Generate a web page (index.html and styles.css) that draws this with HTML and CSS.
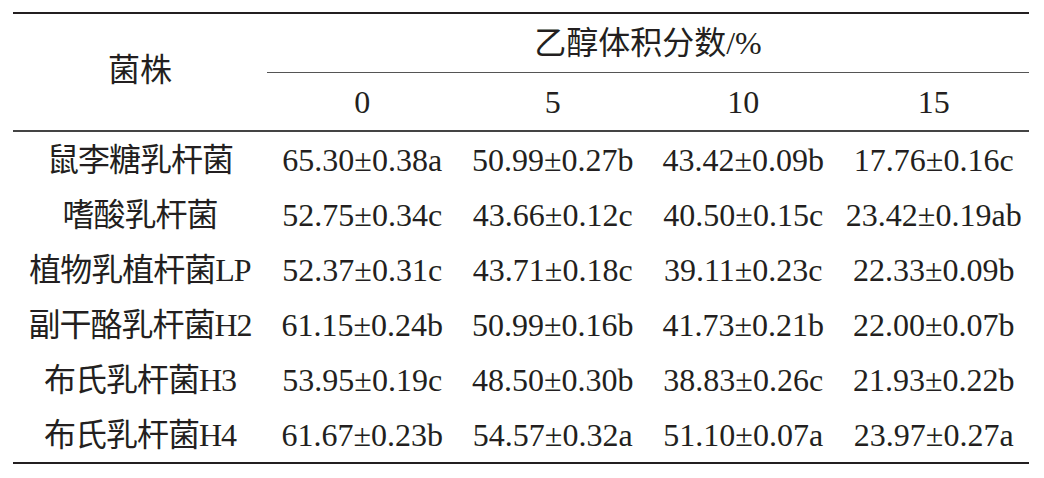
FILE: index.html
```html
<!DOCTYPE html>
<html lang="zh-CN">
<head>
  <meta charset="UTF-8">
  <meta name="viewport" content="width=device-width, initial-scale=1.0">
  <title>乙醇体积分数对菌株的影响</title>
  <link rel="stylesheet" href="styles.css">
</head>
<body>
  <table class="data-table">
    <thead>
      <tr class="head-top">
        <th rowspan="2" class="strain-head">菌株</th>
        <th colspan="4" class="group-head">乙醇体积分数/%</th>
      </tr>
      <tr class="head-sub">
        <th>0</th>
        <th>5</th>
        <th>10</th>
        <th>15</th>
      </tr>
    </thead>
    <tbody>
      <tr>
        <td class="strain">鼠李糖乳杆菌</td>
        <td>65.30±0.38a</td>
        <td>50.99±0.27b</td>
        <td>43.42±0.09b</td>
        <td>17.76±0.16c</td>
      </tr>
      <tr>
        <td class="strain">嗜酸乳杆菌</td>
        <td>52.75±0.34c</td>
        <td>43.66±0.12c</td>
        <td>40.50±0.15c</td>
        <td>23.42±0.19ab</td>
      </tr>
      <tr>
        <td class="strain">植物乳植杆菌LP</td>
        <td>52.37±0.31c</td>
        <td>43.71±0.18c</td>
        <td>39.11±0.23c</td>
        <td>22.33±0.09b</td>
      </tr>
      <tr>
        <td class="strain">副干酪乳杆菌H2</td>
        <td>61.15±0.24b</td>
        <td>50.99±0.16b</td>
        <td>41.73±0.21b</td>
        <td>22.00±0.07b</td>
      </tr>
      <tr>
        <td class="strain">布氏乳杆菌H3</td>
        <td>53.95±0.19c</td>
        <td>48.50±0.30b</td>
        <td>38.83±0.26c</td>
        <td>21.93±0.22b</td>
      </tr>
      <tr>
        <td class="strain">布氏乳杆菌H4</td>
        <td>61.67±0.23b</td>
        <td>54.57±0.32a</td>
        <td>51.10±0.07a</td>
        <td>23.97±0.27a</td>
      </tr>
    </tbody>
  </table>
</body>
</html>
```

FILE: styles.css
```css
body {
  margin: 0;
  padding: 12px 15px 0 13px;
  background: #fff;
  color: #231f20;
  font-family: "Liberation Serif", "Noto Sans CJK SC", serif;
  font-size: 32px;
}

/* Three-line table */
.data-table {
  width: 1016px;
  border-collapse: collapse;
  table-layout: fixed;
  border-top: 2px solid #231f20;
  border-bottom: 2px solid #231f20;
}

.data-table th,
.data-table td {
  padding: 0;
  text-align: center;
  font-weight: normal;
  white-space: nowrap;
  line-height: 1;
}

.strain-head {
  width: 254px;
  padding-bottom: 4px !important;
  border-bottom: 2px solid #444;
}

.head-top th {
  height: 58px;
}

.group-head {
  border-bottom: 1px solid #555;
}

.head-sub th {
  height: 57px;
  border-bottom: 2px solid #444;
}

.data-table tbody td {
  height: 55px;
}

.strain {
  letter-spacing: -1px;
}
```
